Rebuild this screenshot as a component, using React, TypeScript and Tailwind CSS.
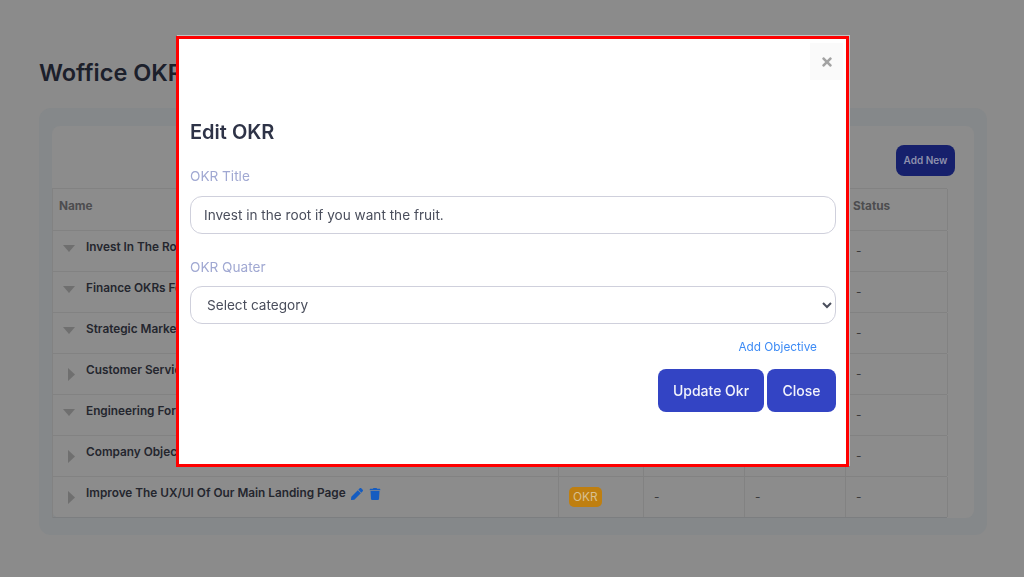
import { FaPen, FaTimes, FaTrash } from 'react-icons/fa'

const rows = [
  { name: 'Invest In The Root If You Want The Fruit', open: true },
  { name: 'Finance OKRs For This Quarter', open: true },
  { name: 'Strategic Marketing OKRs', open: true },
  { name: 'Customer Service OKRs', open: false },
  { name: 'Engineering For Growth', open: true },
  { name: 'Company Objectives', open: false },
  { name: 'Improve The UX/UI Of Our Main Landing Page', open: false },
]

const cellClass = 'flex items-center border-r border-[#828282] px-[10px]'

function Arrow({ open }: { open: boolean }) {
  if (open) {
    return (
      <svg width="12" height="7" viewBox="0 0 12 7" className="mb-[5px] ml-[4px] mr-[11px] shrink-0">
        <polygon points="0,0 12,0 6,7" fill="#6f6f6f" />
      </svg>
    )
  }
  return (
    <svg width="7" height="13" viewBox="0 0 7 13" className="ml-[9px] mr-[11px] shrink-0">
      <polygon points="0,0 7,6.5 0,13" fill="#6f6f6f" />
    </svg>
  )
}

function OkrTable() {
  return (
    <div className="w-[895px] border-t border-l border-[#828282] text-[11.8px]">
      <div className="grid h-[42px] grid-cols-[506px_85px_101px_101px_102px] border-b border-[#828282] font-bold text-[#4d4d4f]">
        <div className={cellClass + ' !px-[6px]'}>
          <span className="mb-[6px]">Name</span>
        </div>
        <div className={cellClass}></div>
        <div className={cellClass}></div>
        <div className={cellClass}></div>
        <div className={cellClass + ' !px-[7px]'}>
          <span className="mb-[6px]">Status</span>
        </div>
      </div>
      {rows.map((row, index) => (
        <div
          key={row.name}
          className={
            'grid h-[41px] grid-cols-[506px_85px_101px_101px_102px] border-b ' +
            (index === rows.length - 1 ? 'border-[#7c7e80]' : 'border-[#828282]')
          }
        >
          <div className={cellClass + ' !px-[6px] font-semibold text-[#24262e]'}>
            <Arrow open={row.open} />
            <span className="mb-[7px] whitespace-nowrap">{row.name}</span>
            <FaPen className="mb-[7px] ml-[5px] text-[12px] text-[#155cc0]" />
            <FaTrash className="mb-[7px] ml-[6px] text-[12px] text-[#155cc0]" />
          </div>
          <div className={cellClass}>
            <span className="rounded-[5px] bg-[#bf7f10] px-[4px] py-[3px] leading-[14px] text-[#d8c090]">OKR</span>
          </div>
          <div className={cellClass + ' pt-[1px] text-[#3a3a3c]'}>-</div>
          <div className={cellClass + ' pt-[1px] text-[#3a3a3c]'}>-</div>
          <div className={cellClass + ' pt-[1px] text-[#3a3a3c]'}>-</div>
        </div>
      ))}
    </div>
  )
}

function EditModal() {
  return (
    <div className="fixed inset-0 flex items-start justify-center pt-[36px] pl-[1px]">
      <div className="h-[431px] w-[673px] border-[3px] border-[#ff0000] bg-white pr-[10px] pl-[11px] shadow-[1px_-1px_0_#c4c4c4]">
        <div className="flex justify-end">
          <button
            type="button"
            className="mt-[4px] -mr-[7px] flex h-[37px] w-[33px] items-center justify-center bg-[#fafafa] text-[#a3a3a3]"
          >
            <FaTimes className="text-[14px]" />
          </button>
        </div>
        <h2 className="mt-[38px] text-[20px] leading-[28px] font-semibold text-[#2e3347]">Edit OKR</h2>

        <label className="mt-[20px] block text-[13.6px] leading-[20px] text-[#a0a8d2]">OKR Title</label>
        <input
          type="text"
          readOnly
          value="Invest in the root if you want the fruit."
          className="mt-[10px] h-[38px] w-full rounded-[12px] border border-[#cfd0dc] bg-white px-[13px] text-[13.6px] text-[#4a4e5c] outline-none"
        />

        <label className="mt-[23px] block text-[13.6px] leading-[20px] text-[#a0a8d2]">OKR Quater</label>
        <select className="mt-[9px] h-[38px] w-full rounded-[12px] border border-[#cfd0dc] bg-white px-[12px] text-[13.6px] text-[#4a4e5c] outline-none">
          <option>Select category</option>
        </select>

        <div className="mt-[14px] pr-[19px] text-right text-[11.8px] leading-[18px] text-[#3d8bf5]">Add Objective</div>

        <div className="mt-[13px] flex justify-end gap-[3px]">
          <button
            type="button"
            className="h-[43px] w-[106px] rounded-[8px] bg-[#3344c4] text-[14px] font-medium text-[#f2f3fb]"
          >
            Update Okr
          </button>
          <button
            type="button"
            className="h-[43px] w-[69px] rounded-[8px] bg-[#3344c4] text-[14px] font-medium text-[#f2f3fb]"
          >
            Close
          </button>
        </div>
      </div>
    </div>
  )
}

export default function App() {
  return (
    <div className="h-[577px] overflow-hidden bg-[#8b8b8b] pt-[57px] pr-[37px] pl-[39px] font-['Inter',sans-serif]">
      <h1 className="text-[23.5px] leading-[32px] font-semibold text-[#1c202b]">Woffice OKRs</h1>

      <div className="mt-[19px] h-[427px] rounded-[12px] bg-[#85888a] pt-[18px] pr-[13px] pl-[13px]">
        <div className="h-[392px] rounded-[8px] bg-[#8c8c8c]">
          <div className="flex h-[62px] items-end justify-end pr-[19px] pb-[12px]">
            <button
              type="button"
              className="h-[31px] w-[59px] rounded-[8px] bg-[#16206c] text-[10px] font-semibold text-[#8d90ad]"
            >
              Add New
            </button>
          </div>
          <OkrTable />
        </div>
      </div>

      <EditModal />
    </div>
  )
}
